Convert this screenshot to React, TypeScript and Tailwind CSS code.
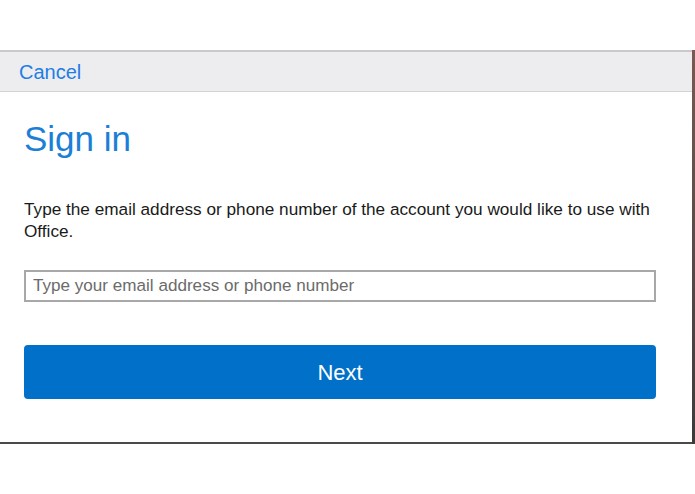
// App.tsx
// Office sign-in sheet

export default function App() {
  return (
    <div className="w-[695px] h-[494px] bg-white overflow-hidden font-['Liberation_Sans',Arial,sans-serif]">
      <div className="h-[50px]" />
      <div className="flex h-[394px]">
        {/* Sheet */}
        <div className="w-[692px] flex flex-col bg-white border-b-2 border-[#4a4a4a]">
          <div className="h-[42px] bg-[#ededf0] border-t-2 border-t-[#c9c9cc] border-b border-b-[#d3d3d6] flex items-center px-[19px]">
            <button className="text-[20px] text-[#1d7ee3] leading-none">Cancel</button>
          </div>

          <div className="px-[24px] flex flex-col">
            <h1 className="mt-[25px] text-[35px] font-light text-[#1c7fd6] leading-[44px]">
              Sign in
            </h1>

            <p className="mt-[37px] pr-[8px] text-[17.2px] leading-[22px] text-[#1a1a1a]">
              Type the email address or phone number of the account you would like to use with Office.
            </p>

            <input
              type="text"
              placeholder="Type your email address or phone number"
              className="mt-[28px] h-[32px] w-[632px] border-2 border-[#a8a8a8] px-[7px] text-[17.1px] text-[#333] placeholder:text-[#6b6b6b] outline-none"
            />

            <button className="mt-[43px] h-[54px] w-[632px] rounded-[4px] bg-[#0070c8] text-white text-[22px]">
              Next
            </button>
          </div>
        </div>
        {/* Background peeking at right edge */}
        <div className="w-[3px] bg-gradient-to-b from-[#7a5a52] via-[#5a4a48] to-[#3e3a3a]" />
      </div>
    </div>
  );
}
